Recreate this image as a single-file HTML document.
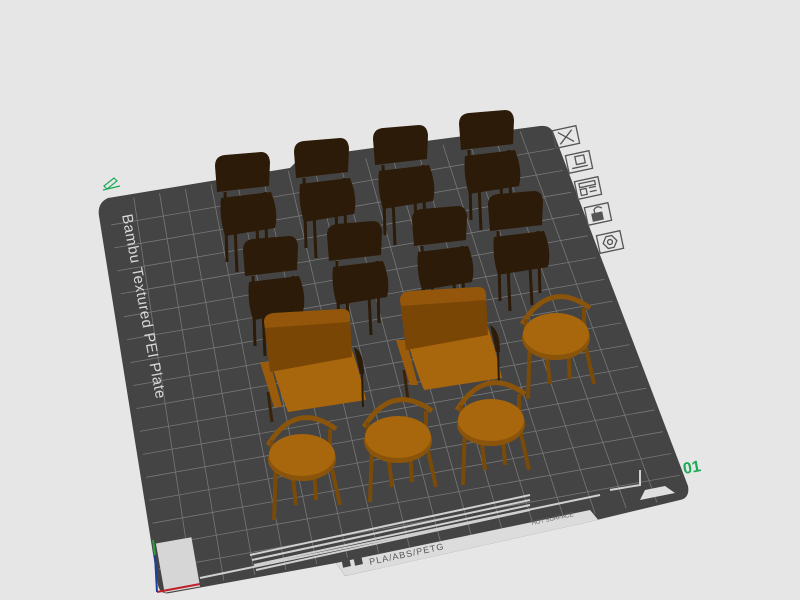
<!DOCTYPE html>
<html><head><meta charset="utf-8"><style>
html,body{margin:0;padding:0;background:#e6e6e6;width:800px;height:600px;overflow:hidden}
svg{display:block}
</style></head><body>
<svg id="s" width="800" height="600" viewBox="0 0 800 600" xmlns="http://www.w3.org/2000/svg" font-family="Liberation Sans, sans-serif">
<defs><clipPath id="pc"><path d="M108,198 L290,168 L300,158 L380,147 L540,126 Q551,125 554,134 L688,486 Q690,498 680,500 L580,524 L345,576 L336,563 L170,593 Q160,595 158,585 L99,216 Q97,203 108,198 Z"/></clipPath></defs>
<path d="M108,198 L290,168 L300,158 L380,147 L540,126 Q551,125 554,134 L688,486 Q690,498 680,500 L580,524 L345,576 L336,563 L170,593 Q160,595 158,585 L99,216 Q97,203 108,198 Z" fill="#444"/>
<g id="grid" clip-path="url(#pc)" stroke="#9a9a9a" stroke-width="0.8" opacity="0.6"></g>
<text transform="translate(122,215) rotate(79.5)" fill="#d8d8d8" font-size="15" letter-spacing="0.5">Bambu Textured PEI Plate</text>
<g clip-path="url(#pc)">
<path d="M345,576 L336,563 L590,510 L600,522 Z" fill="#dcdcdc"/>
<path d="M250,555 L530,495 M252,560 L530,500 M254,565 L530,505 M256,570 L530,510 M200,578 L600,495 M610,490 L640,485 L640,470" stroke="#d0d0d0" stroke-width="2" fill="none"/>
<rect x="160" y="540" width="36" height="50" fill="#d6d6d6" transform="rotate(-10 178 565)"/>
<path d="M640,500 L675,493 L665,486 L645,490Z" fill="#e0e0e0"/>
</g>
<text transform="translate(370,565) rotate(-12)" fill="#555" font-size="9" letter-spacing="1">PLA/ABS/PETG</text>
<text transform="translate(532,525) rotate(-12)" fill="#666" font-size="6">HOT SURFACE</text>
<rect x="342" y="558" width="8" height="9" fill="#444" transform="rotate(-12 346 562)"/>
<rect x="354" y="556" width="8" height="9" fill="#444" transform="rotate(-12 358 560)"/>
<path d="M157,592 L200,584" stroke="#c0202a" stroke-width="2"/>
<path d="M157,592 L155,555" stroke="#1a3fa0" stroke-width="2"/>
<path d="M155,555 L153,540" stroke="#2aa040" stroke-width="2"/>
<g fill="none" stroke="#555" stroke-width="1.3">
<g transform="translate(566,137) rotate(-12)"><rect x="-12" y="-9" width="24" height="18"/><path d="M-7,-6 L7,6 M7,-6 L-7,6"/></g>
<g transform="translate(579,162) rotate(-12)"><rect x="-12" y="-9" width="24" height="18"/><rect x="-3" y="-6" width="9" height="8"/><path d="M-8,5 L8,5"/></g>
<g transform="translate(588,188) rotate(-12)"><rect x="-12" y="-9" width="24" height="18"/><rect x="-8" y="-6" width="16" height="4"/><path d="M-8,0 L-2,0 L-2,6 L-8,6Z M1,0 L8,0 M1,4 L8,4"/></g>
<g transform="translate(598,214) rotate(-12)"><rect x="-12" y="-9" width="24" height="18"/><rect x="-6" y="-1" width="10" height="7" fill="#555"/><path d="M-3,-1 L-3,-5 Q1,-9 5,-5"/></g>
<g transform="translate(610,242) rotate(-12)"><rect x="-12" y="-9" width="24" height="18"/><path d="M-7,0 L-3,-6 L3,-6 L7,0 L3,6 L-3,6Z"/><circle r="2.5"/></g>
</g>
<text x="684" y="474" fill="#1aaa55" font-size="16" font-weight="bold" transform="rotate(-10 684 474)">01</text>
<path d="M104,186 L114,178 L117,181 L107,189Z M103,190 L120,186" stroke="#1aaa55" fill="none" stroke-width="1.2"/>
<g id="ch"></g>
</svg>
<script>
var A=[108,202],B=[546,127],C=[688,497],D=[162,592],N=17;
function P(u,v){return [A[0]*(1-u)*(1-v)+B[0]*u*(1-v)+C[0]*u*v+D[0]*(1-u)*v, A[1]*(1-u)*(1-v)+B[1]*u*(1-v)+C[1]*u*v+D[1]*(1-u)*v];}
var g=document.getElementById('grid'),h='';
for(var i=1;i<N;i++){var t=i/N,p=P(t,0),q=P(t,1),r=P(0,t),s=P(1,t);
h+='<line x1="'+p[0]+'" y1="'+p[1]+'" x2="'+q[0]+'" y2="'+q[1]+'"/><line x1="'+r[0]+'" y1="'+r[1]+'" x2="'+s[0]+'" y2="'+s[1]+'"/>';}
g.innerHTML=h;
var c='';
function dark(x,y){var f='#2c1b08';
c+='<g fill="'+f+'" stroke="'+f+'">';
c+='<line x1="'+(x-18)+'" y1="'+(y+30)+'" x2="'+(x-16)+'" y2="'+(y+100)+'" stroke-width="3"/>';
c+='<line x1="'+(x+22)+'" y1="'+(y+30)+'" x2="'+(x+24)+'" y2="'+(y+92)+'" stroke-width="3"/>';
c+='<line x1="'+(x-8)+'" y1="'+(y+65)+'" x2="'+(x-6)+'" y2="'+(y+110)+'" stroke-width="3"/>';
c+='<line x1="'+(x+14)+'" y1="'+(y+65)+'" x2="'+(x+16)+'" y2="'+(y+104)+'" stroke-width="3"/>';
c+='<path d="M'+(x-28)+','+(y+4)+' Q'+(x-28)+','+(y-6)+' '+(x-18)+','+(y-7)+' L'+(x+18)+','+(y-10)+' Q'+(x+26)+','+(y-10)+' '+(x+27)+','+y+' L'+(x+26)+','+(y+24)+' L'+(x-26)+','+(y+30)+'Z" stroke="none"/>';
c+='<path d="M'+(x-22)+','+(y+36)+' L'+(x+28)+','+(y+30)+' Q'+(x+36)+','+(y+50)+' '+(x+32)+','+(y+66)+' L'+(x-18)+','+(y+74)+' Q'+(x-24)+','+(y+55)+' '+(x-22)+','+(y+36)+'Z" stroke="none"/>';
c+='</g>';}
[[243,162],[322,148],[401,135],[487,120],[271,246],[355,231],[440,216],[516,201]].forEach(function(a){dark(a[0],a[1]);});
function pt(x,y,a,b){return (x+a)+','+(y+b);}
function arm(x,y){
c+='<line x1="'+(x-2)+'" y1="'+(y+80)+'" x2="'+(x+2)+'" y2="'+(y+110)+'" stroke="#3a2208" stroke-width="3"/>';
c+='<path d="M'+pt(x,y,-10,50)+' L'+pt(x,y,0,50)+' L'+pt(x,y,12,95)+' L'+pt(x,y,4,95)+'Z" fill="#9a5c0a"/>';
c+='<path d="M'+pt(x,y,0,46)+' L'+pt(x,y,80,32)+' Q'+pt(x,y,90,60)+' '+pt(x,y,96,88)+' L'+pt(x,y,18,100)+' Q'+pt(x,y,8,75)+' '+pt(x,y,0,46)+'Z" fill="#a9670d"/>';
c+='<path d="M'+pt(x,y,-6,10)+' Q'+pt(x,y,-6,2)+' '+pt(x,y,4,1)+' L'+pt(x,y,72,-3)+' Q'+pt(x,y,80,-3)+' '+pt(x,y,80,5)+' L'+pt(x,y,82,45)+' L'+pt(x,y,0,60)+'Z" fill="#7a4606"/>';
c+='<path d="M'+pt(x,y,-6,10)+' Q'+pt(x,y,-6,2)+' '+pt(x,y,4,1)+' L'+pt(x,y,72,-3)+' Q'+pt(x,y,80,-3)+' '+pt(x,y,80,5)+' L'+pt(x,y,80,10)+' L'+pt(x,y,-5,16)+'Z" fill="#93560a"/>';
c+='<path d="M'+pt(x,y,84,35)+' Q'+pt(x,y,94,40)+' '+pt(x,y,94,62)+' L'+pt(x,y,90,62)+'Z" fill="#2c1b08"/>';
c+='<line x1="'+(x+92)+'" y1="'+(y+60)+'" x2="'+(x+93)+'" y2="'+(y+95)+'" stroke="#2c1b08" stroke-width="2"/>';}
arm(270,312);arm(406,290);
function stool(x,y){var o='#a9670d';
c+='<g stroke="#7a4a08" stroke-width="4" fill="none">';
c+='<line x1="'+(x-26)+'" y1="'+(y+5)+'" x2="'+(x-28)+'" y2="'+(y+65)+'"/><line x1="'+(x+28)+'" y1="'+(y+5)+'" x2="'+(x+38)+'" y2="'+(y+50)+'"/>';
c+='<line x1="'+(x-10)+'" y1="'+(y+15)+'" x2="'+(x-6)+'" y2="'+(y+50)+'"/><line x1="'+(x+12)+'" y1="'+(y+15)+'" x2="'+(x+14)+'" y2="'+(y+45)+'"/>';
c+='<path d="M'+(x-34)+','+(y-10)+' Q'+(x-6)+','+(y-55)+' '+(x+34)+','+(y-26)+'" stroke="#8a540a" stroke-width="5"/>';
c+='<line x1="'+(x-30)+'" y1="'+(y-15)+'" x2="'+(x-30)+'" y2="'+(y+5)+'"/><line x1="'+(x+28)+'" y1="'+(y-26)+'" x2="'+(x+28)+'" y2="'+(y-5)+'"/>';
c+='</g>';
c+='<ellipse cx="'+x+'" cy="'+(y+4)+'" rx="34" ry="22" fill="#8a540a"/>';
c+='<ellipse cx="'+x+'" cy="'+y+'" rx="33" ry="21" fill="'+o+'"/>';}
stool(556,334);stool(302,455);stool(398,437);stool(491,420);
document.getElementById('ch').innerHTML=c;
</script>
</body></html>
